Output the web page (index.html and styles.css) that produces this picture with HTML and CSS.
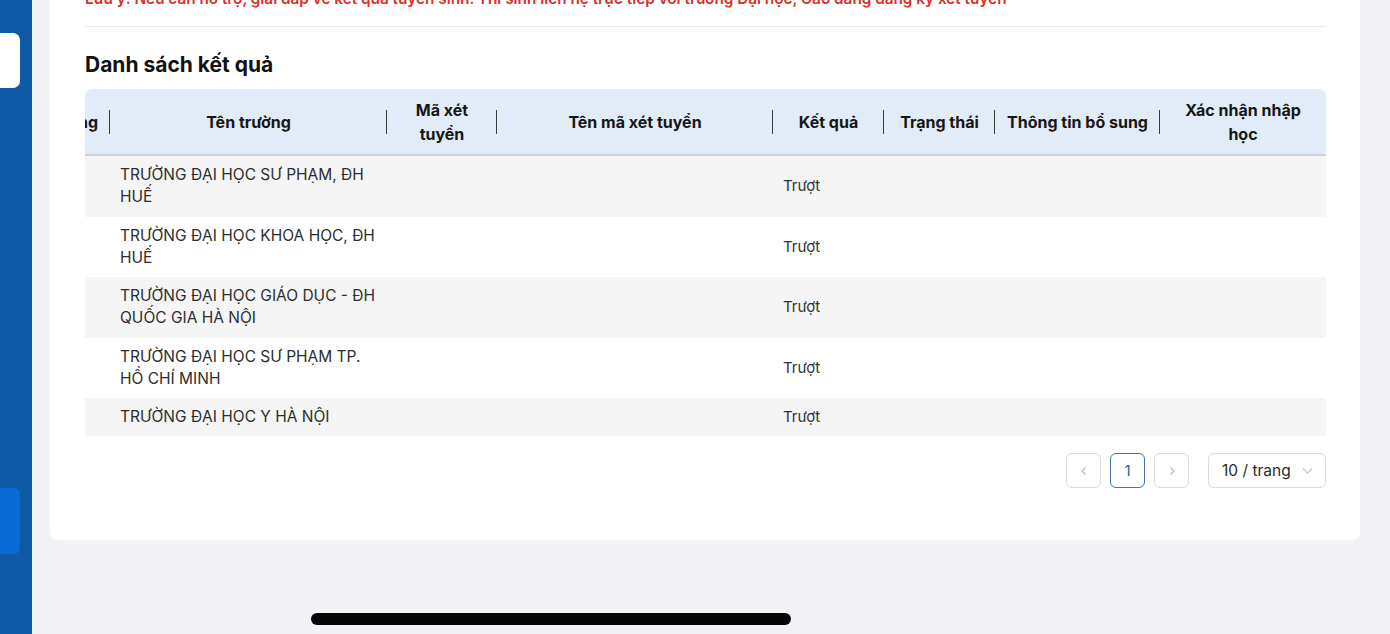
FILE: index.html
```html
<!DOCTYPE html>
<html lang="vi">
<head>
<meta charset="utf-8">
<title>Danh sách kết quả</title>
<link rel="stylesheet" href="styles.css">
</head>
<body>
<div class="app">
  <aside class="sidebar">
    <div class="side-card"></div>
    <div class="side-active"></div>
  </aside>
  <main class="main">
    <section class="card">
      <p class="note">Lưu ý: Nếu cần hỗ trợ, giải đáp về kết quả tuyển sinh. Thí sinh liên hệ trực tiếp với trường Đại học, Cao đẳng đăng ký xét tuyển</p>
      <hr class="divider">
      <h2 class="title">Danh sách kết quả</h2>
      <div class="table-wrap">
        <table class="result-table">
          <colgroup>
            <col class="c1"><col class="c2"><col class="c3"><col class="c4"><col class="c5"><col class="c6"><col class="c7"><col class="c8">
          </colgroup>
          <thead>
            <tr>
              <th class="sep th-first">Nguyện vọng</th>
              <th class="sep">Tên trường</th>
              <th class="sep">Mã xét tuyển</th>
              <th class="sep">Tên mã xét tuyển</th>
              <th class="sep">Kết quả</th>
              <th class="sep">Trạng thái</th>
              <th class="sep">Thông tin bổ sung</th>
              <th class="th-last">Xác nhận nhập học</th>
            </tr>
          </thead>
          <tbody>
            <tr class="odd"><td class="num">1</td><td>TRƯỜNG ĐẠI HỌC SƯ PHẠM, ĐH HUẾ</td><td></td><td></td><td>Trượt</td><td></td><td></td><td></td></tr>
            <tr><td class="num">2</td><td>TRƯỜNG ĐẠI HỌC KHOA HỌC, ĐH HUẾ</td><td></td><td></td><td>Trượt</td><td></td><td></td><td></td></tr>
            <tr class="odd"><td class="num">3</td><td>TRƯỜNG ĐẠI HỌC GIÁO DỤC - ĐH QUỐC GIA HÀ NỘI</td><td></td><td></td><td>Trượt</td><td></td><td></td><td></td></tr>
            <tr><td class="num">4</td><td>TRƯỜNG ĐẠI HỌC SƯ PHẠM TP. HỒ CHÍ MINH</td><td></td><td></td><td>Trượt</td><td></td><td></td><td></td></tr>
            <tr class="odd"><td class="num">5</td><td>TRƯỜNG ĐẠI HỌC Y HÀ NỘI</td><td></td><td></td><td>Trượt</td><td></td><td></td><td></td></tr>
          </tbody>
        </table>
      </div>
      <nav class="pager">
        <button class="pg-btn pg-arrow" aria-label="Trang trước">
          <svg width="10" height="10" viewBox="0 0 10 10"><path d="M6.5 1.5 3 5l3.5 3.5" fill="none" stroke="#bfbfbf" stroke-width="1.2"/></svg>
        </button>
        <button class="pg-btn pg-active">1</button>
        <button class="pg-btn pg-arrow" aria-label="Trang sau">
          <svg width="10" height="10" viewBox="0 0 10 10"><path d="M3.5 1.5 7 5 3.5 8.5" fill="none" stroke="#bfbfbf" stroke-width="1.2"/></svg>
        </button>
        <div class="pg-size">
          <span>10 / trang</span>
          <svg width="11" height="8" viewBox="0 0 11 8"><path d="M1 1.5 5.5 6 10 1.5" fill="none" stroke="#c4c4c4" stroke-width="1.1"/></svg>
        </div>
      </nav>
    </section>
  </main>
  <div class="home-indicator"></div>
</div>
</body>
</html>
```

FILE: styles.css
```css
* { box-sizing: border-box; }
html, body { margin: 0; padding: 0; }
body {
  width: 1390px;
  height: 634px;
  overflow: hidden;
  font-family: Inter, "Noto Sans", "DejaVu Sans", sans-serif;
  background: #f2f2f7;
}
.app {
  position: relative;
  display: flex;
  height: 634px;
}
.sidebar {
  width: 32px;
  flex: none;
  background: #0e5aa6;
  display: flex;
  flex-direction: column;
  padding-top: 33px;
}
.side-card {
  width: 20px;
  height: 55px;
  background: #ffffff;
  border-radius: 0 7px 7px 0;
}
.side-active {
  width: 20px;
  height: 66px;
  margin-top: 400px;
  background: #0a6ad5;
  border-radius: 0 6px 6px 0;
}
.main {
  flex: 1;
  padding: 0 30px 0 18px;
  background: #f2f2f7;
}
.card {
  margin-top: -30px;
  height: 570px;
  background: #ffffff;
  border-radius: 0 0 8px 8px;
  padding: 19px 34px 0 35px;
}
.note {
  margin: 0;
  font-size: 15.3px;
  line-height: 20px;
  font-weight: 600;
  color: #d9302c;
  white-space: nowrap;
}
.divider {
  margin: 17px 0 0;
  border: 0;
  border-top: 1.5px solid #ececec;
}
.title {
  margin: 24px 0 0;
  font-size: 21px;
  line-height: 28px;
  font-weight: 700;
  color: #111;
}
.table-wrap {
  margin-top: 10px;
  overflow: hidden;
  border-radius: 8px 8px 0 0;
  box-shadow: inset 7px 0 6px -5px rgba(0,0,0,0.14);
}
.result-table {
  width: 1346px;
  margin-left: -105px;
  border-collapse: separate;
  border-spacing: 0;
  table-layout: fixed;
}
.c1 { width: 130px; }
.c2 { width: 277px; }
.c3 { width: 110px; }
.c4 { width: 276px; }
.c5 { width: 111px; }
.c6 { width: 111px; }
.c7 { width: 165px; }
.c8 { width: 166px; }
.result-table th {
  position: relative;
  height: 67px;
  padding: 0 8px;
  background: #e2ebf8;
  border-bottom: 2px solid #c8d4e4;
  font-size: 16px;
  line-height: 24px;
  font-weight: 700;
  color: #161616;
  text-align: center;
  vertical-align: middle;
}
.result-table th.th-first {
  text-align: right;
  padding-right: 12px;
  white-space: nowrap;
}
.result-table th.th-last { padding: 0 18px; }
.result-table th.sep::after {
  content: "";
  position: absolute;
  right: 0;
  top: 21px;
  width: 1.5px;
  height: 24px;
  background: #3a3a3a;
}
.result-table td {
  padding: 8px 10px;
  height: 60.5px;
  font-size: 15.5px;
  line-height: 22px;
  color: #2e2e2e;
  vertical-align: middle;
  background: #ffffff;
}
.result-table tr:last-child td { height: 38px; }
.result-table tr.odd td { background: #f5f5f5; }
.result-table td.num { text-align: center; }
.result-table td:nth-child(5) { font-size: 15px; color: #333; }
.pager {
  display: flex;
  justify-content: flex-end;
  align-items: center;
  margin-top: 17px;
}
.pg-btn {
  width: 35px;
  height: 35px;
  margin-left: 9px;
  border: 1px solid #dcdcdc;
  border-radius: 6px;
  background: #fff;
  font-family: inherit;
  font-size: 15px;
  color: #2d5c9c;
  display: flex;
  align-items: center;
  justify-content: center;
  padding: 0;
}
.pg-btn:first-child { margin-left: 0; }
.pg-active { border: 1.5px solid #4b72a8; }
.pg-size {
  width: 118px;
  height: 35px;
  margin-left: 19px;
  border: 1px solid #dcdcdc;
  border-radius: 6px;
  display: flex;
  align-items: center;
  justify-content: space-between;
  padding: 0 12px 0 13px;
  font-size: 15.5px;
  color: #2a2a2a;
}
.home-indicator {
  position: absolute;
  left: 311px;
  top: 613px;
  width: 480px;
  height: 12px;
  border-radius: 6px;
  background: #050505;
}
```
